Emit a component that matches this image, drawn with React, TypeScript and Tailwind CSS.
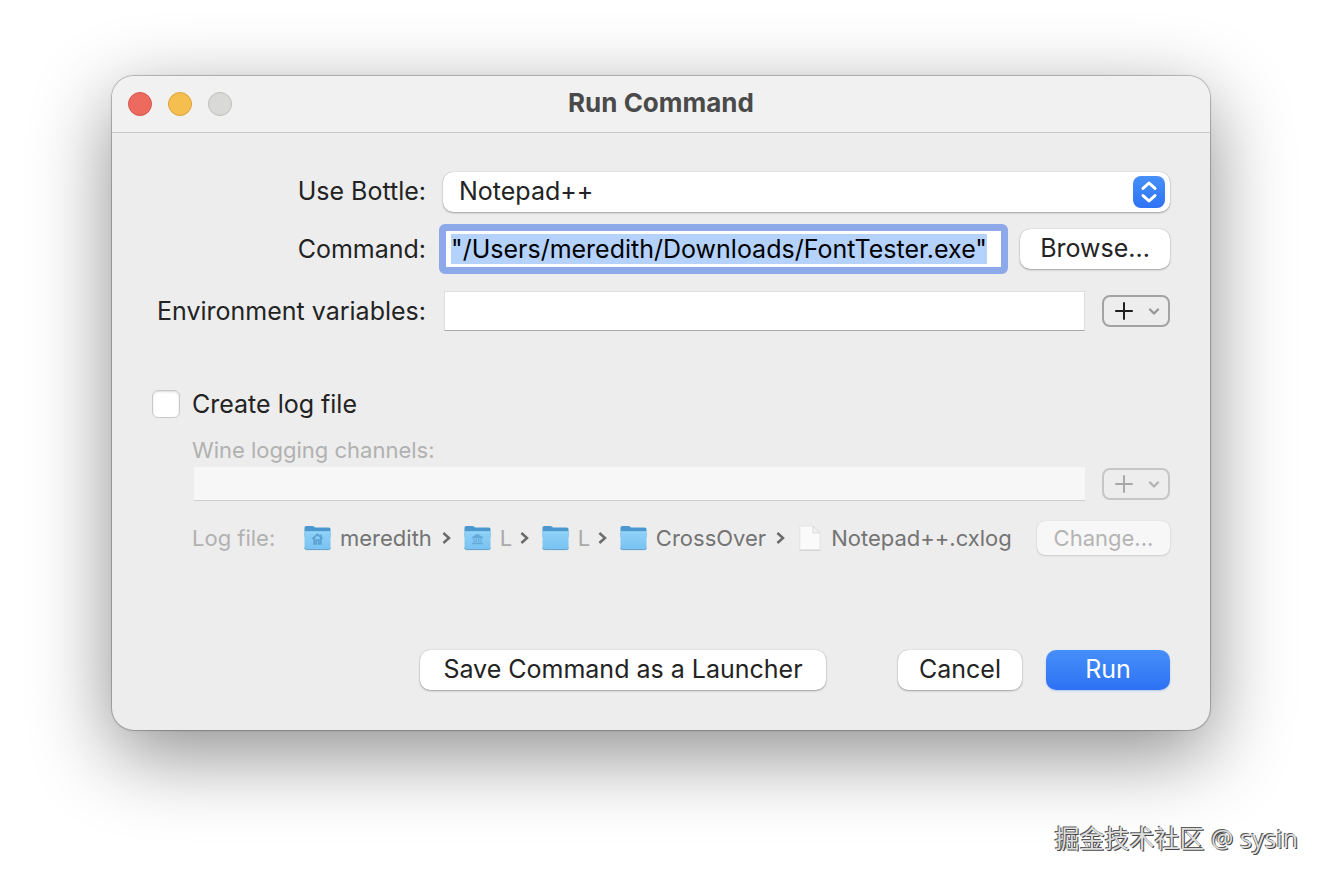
import { Fragment } from "react";

type FolderIconProps = {
  glyph?: "home" | "library";
};

const FolderIcon = ({ glyph }: FolderIconProps) => (
  <svg width="27" height="26" viewBox="0 0 27 26" fill="none" className="shrink-0" aria-hidden="true">
    <defs>
      <linearGradient id="folder-front" x1="0" y1="0" x2="0" y2="1">
        <stop offset="0" stopColor="#8ed1f8" />
        <stop offset="1" stopColor="#79c2f0" />
      </linearGradient>
    </defs>
    <path d="M0.5 3C0.5 1.8 1.2 1 2.4 1H8.3C9 1 9.5 1.2 10 1.6L11 2.4H24.6C25.8 2.4 26.5 3.1 26.5 4.3V12H0.5Z" fill="#4b98d1" />
    <path d="M0.5 6.6H26.5V22.6C26.5 24 25.8 24.6 24.6 24.6H2.4C1.2 24.6 0.5 24 0.5 22.6Z" fill="url(#folder-front)" />
    <path d="M0.5 6.9H26.5" stroke="#a5dcfb" strokeWidth="0.8" />
    <path d="M0.6 22.8C0.7 24.1 1.4 24.6 2.4 24.6H24.6C25.6 24.6 26.3 24.1 26.4 22.8" stroke="#5f9fc9" strokeWidth="1" />
    {glyph === "home" && (
      <path
        d="M8.3 13.9L13.5 9.4L18.7 13.9M10.2 13V18.8H12.2V15.2H14.8V18.8H16.8V13M17 9.8V12"
        stroke="#5aa3d4"
        strokeWidth="1.8"
      />
    )}
    {glyph === "library" && (
      <>
        <path d="M7.8 12.2L13.5 8.8L19.2 12.2V13.2H7.8Z" fill="#62abdb" />
        <path d="M10 13.4V17.8M12.3 13.4V17.8M14.7 13.4V17.8M17 13.4V17.8" stroke="#62abdb" strokeWidth="1.2" />
        <path d="M8 18.6H19" stroke="#62abdb" strokeWidth="1.4" />
      </>
    )}
  </svg>
);

const DocumentIcon = () => (
  <svg width="24" height="26" viewBox="-1 0 24 26" fill="none" className="shrink-0" aria-hidden="true">
    <path d="M0.8 1H14L21 8V25H0.8Z" fill="#fafafa" stroke="#e0e0e0" strokeWidth="0.8" />
    <path d="M14 1V8H21Z" fill="#f3f3f3" stroke="#d2d2d2" strokeWidth="0.8" />
    <path d="M0.8 25.2H21" stroke="#cdcdcd" strokeWidth="1" />
  </svg>
);

const PathChevron = () => (
  <svg width="9" height="14" viewBox="0 0 9 14" fill="none" className="mr-[13px] ml-2.5 shrink-0" aria-hidden="true">
    <path d="M1.4 2L7 7L1.4 12" stroke="#6b6b6b" strokeWidth="2.5" />
  </svg>
);

type AddButtonProps = {
  label: string;
  disabled?: boolean;
};

const AddButton = ({ label, disabled }: AddButtonProps) => (
  <button
    type="button"
    aria-label={label}
    disabled={disabled}
    className="flex h-8 w-17 shrink-0 items-center justify-between rounded-lg border-2 border-[#a3a3a3] pr-2 pl-2.5 text-[#1f1f1f] disabled:border-[#c6c6c6] disabled:text-[#a9a9a9]"
  >
    <svg width="20" height="20" viewBox="0 0 20 20" fill="none" aria-hidden="true">
      <path d="M1.2 10H18.8M10 1.2V18.8" stroke="currentColor" strokeWidth="2" />
    </svg>
    <svg width="12" height="10" viewBox="0 0 12 10" fill="none" aria-hidden="true">
      <path
        d="M2 3.5L6 7.5L10 3.5"
        stroke={disabled ? "#b4b4b4" : "#979797"}
        strokeWidth="2.4"
        strokeLinecap="round"
        strokeLinejoin="round"
      />
    </svg>
  </button>
);

const pushButton =
  "flex h-10 shrink-0 items-center justify-center rounded-[10px] bg-white pb-0.5 shadow-[0_0_1px_rgba(0,0,0,0.3),0_1px_2px_rgba(0,0,0,0.3)]";

const logPath = [
  { name: "meredith", icon: <FolderIcon glyph="home" /> },
  { name: "L", icon: <FolderIcon glyph="library" />, dim: true },
  { name: "L", icon: <FolderIcon />, dim: true },
  { name: "CrossOver", icon: <FolderIcon /> },
  { name: "Notepad++.cxlog", icon: <DocumentIcon /> },
];

const TitleBar = () => (
  <header className="relative flex h-[57px] items-center justify-center rounded-t-[22px] border-b border-[#c8c8c8] bg-[#f1f1f1]">
    <div className="absolute left-4 flex gap-4">
      <button type="button" aria-label="Close" className="size-6 rounded-full border border-[#d6564d] bg-[#ec6a5e]" />
      <button type="button" aria-label="Minimize" className="size-6 rounded-full border border-[#dfa23a] bg-[#f5bf4f]" />
      <button type="button" aria-label="Zoom" disabled className="size-6 rounded-full border border-[#bebebd] bg-[#d9d9d8]" />
    </div>
    <h1 className="pb-0.5 text-[26px] font-bold text-[#4a4a4a]">Run Command</h1>
  </header>
);

const CommandForm = () => (
  <div className="grid grid-cols-[274px_1fr] items-center gap-x-[17px]">
    <label htmlFor="bottle" className="pb-0.5 text-right">Use Bottle:</label>
    <div className="relative">
      <select
        id="bottle"
        className="block h-10 w-full appearance-none rounded-[10px] bg-white pr-12 pb-0.5 pl-4 shadow-[0_0_1px_rgba(0,0,0,0.3),0_1px_2px_rgba(0,0,0,0.3)]"
      >
        <option>Notepad++</option>
      </select>
      <span className="pointer-events-none absolute top-1 right-[5px] flex size-8 items-center justify-center rounded-lg bg-linear-to-b from-[#4690f8] to-[#2f72f5]">
        <svg width="18" height="24" viewBox="0 0 18 24" fill="none" aria-hidden="true">
          <path
            d="M3 8.4L9 3L15 8.4M3 15.6L9 21L15 15.6"
            stroke="white"
            strokeWidth="3"
            strokeLinecap="round"
            strokeLinejoin="round"
          />
        </svg>
      </span>
    </div>

    <label htmlFor="command" className="mt-3 text-right">Command:</label>
    <div className="mt-3 -ml-1 flex items-center gap-3">
      <input
        id="command"
        type="text"
        autoFocus
        onFocus={(event) => event.currentTarget.select()}
        defaultValue={'"/Users/meredith/Downloads/FontTester.exe"'}
        className="h-[50px] min-w-0 flex-1 rounded-md border-[7px] border-[#8ea9ea] bg-white px-[5px] text-black outline-none selection:bg-[#b4d2fc] selection:text-black"
      />
      <button type="button" className={`${pushButton} w-[150px]`}>Browse...</button>
    </div>

    <label htmlFor="environment" className="mt-[17px] text-right">Environment variables:</label>
    <div className="mt-[17px] ml-px flex items-center gap-[17px]">
      <input
        id="environment"
        type="text"
        className="h-10 min-w-0 flex-1 border border-[#dedede] border-b-[#ababab] bg-white px-2"
      />
      <AddButton label="Add environment variable" />
    </div>
  </div>
);

const LogSection = () => (
  <fieldset className="mt-[57px] text-[22px] leading-7">
    <div className="flex items-center gap-3">
      <input
        id="create-log"
        type="checkbox"
        className="size-7 appearance-none rounded-md border border-[#c9c9c9] bg-white shadow-[inset_0_1px_2px_rgba(0,0,0,0.15)] checked:bg-[#2f72f5]"
      />
      <label htmlFor="create-log" className="text-[25px] leading-8">Create log file</label>
    </div>

    <div className="mt-4 pl-10">
      <label htmlFor="channels" className="block text-[#b1b1b1]">Wine logging channels:</label>
      <div className="mt-[3px] ml-0.5 flex items-center gap-[17px]">
        <input
          id="channels"
          type="text"
          disabled
          className="h-[34px] min-w-0 flex-1 border-b border-[#cfcfcf] bg-[#f7f7f7] px-2"
        />
        <AddButton label="Add logging channel" disabled />
      </div>

      <div className="mt-5 flex items-center">
        <span className="w-28 shrink-0 text-[#b1b1b1]">Log file:</span>
        <nav aria-label="Log file" className="flex min-w-0 flex-1 items-center">
          {logPath.map((item, index) => (
            <Fragment key={index}>
              {index > 0 && <PathChevron />}
              {item.icon}
              <span className={item.dim ? "ml-[9px] w-2.5 text-[#a9a9a9]" : "ml-[9px] text-[#747474]"}>{item.name}</span>
            </Fragment>
          ))}
        </nav>
        <button
          type="button"
          disabled
          className="h-[34px] w-[133px] shrink-0 rounded-lg bg-[#f7f7f7] text-[#b4b4b4] shadow-[0_0_1px_rgba(0,0,0,0.2),0_1px_2px_rgba(0,0,0,0.12)]"
        >
          Change...
        </button>
      </div>
    </div>
  </fieldset>
);

const App = () => {
  return (
    <main className="relative min-h-screen overflow-hidden bg-white px-28 pt-19 pb-37 font-['Inter','Liberation_Sans',sans-serif] text-[25px] leading-8 text-[#232323]">
      <section
        aria-label="Run Command"
        className="rounded-[22px] bg-[#ededed] shadow-[0_0_1px_1px_rgba(0,0,0,0.25),0_24px_80px_rgba(0,0,0,0.45)]"
      >
        <TitleBar />
        <form className="px-10 pt-[39px] pb-10" onSubmit={(event) => event.preventDefault()}>
          <CommandForm />
          <LogSection />
          <div className="mt-[95px] flex justify-end">
            <button type="button" className={`${pushButton} w-[406px]`}>Save Command as a Launcher</button>
            <button type="button" className={`${pushButton} ml-18 w-31`}>Cancel</button>
            <button
              type="submit"
              className="ml-6 flex h-10 w-31 items-center justify-center rounded-[10px] bg-linear-to-b from-[#468ff8] to-[#2e71f5] pb-0.5 text-white shadow-[0_1px_2px_rgba(47,114,245,0.3)]"
            >
              Run
            </button>
          </div>
        </form>
      </section>
      <p className="absolute right-6 bottom-6 font-['Open_Sans','Noto_Sans_CJK_SC',sans-serif] text-[#dedede] [text-shadow:-1px_-1px_0_#5a5a5a,1px_1px_0_#444444]">
        掘金技术社区 @ sysin
      </p>
    </main>
  );
};

export default App;
